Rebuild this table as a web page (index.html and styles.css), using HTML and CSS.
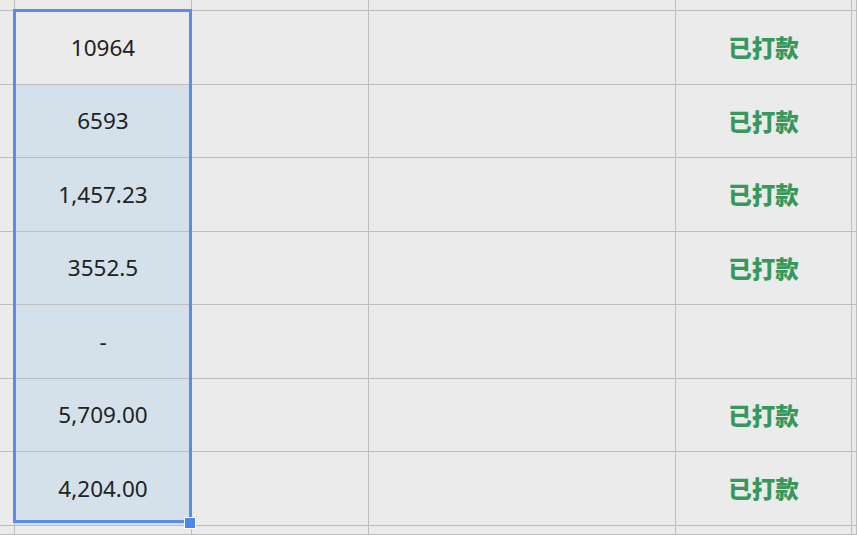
FILE: index.html
```html
<!DOCTYPE html>
<html lang="zh">
<head>
<meta charset="utf-8">
<link rel="stylesheet" href="styles.css">
</head>
<body>
<div class="sheet">
  <div class="grid">
    <div class="c"></div><div class="c"></div><div class="c"></div><div class="c"></div><div class="c"></div><div class="c"></div>

    <div class="c"></div><div class="c num active">10964</div><div class="c"></div><div class="c"></div><div class="c status">已打款</div><div class="c"></div>
    <div class="c"></div><div class="c num sel">6593</div><div class="c"></div><div class="c"></div><div class="c status">已打款</div><div class="c"></div>
    <div class="c"></div><div class="c num sel">1,457.23</div><div class="c"></div><div class="c"></div><div class="c status">已打款</div><div class="c"></div>
    <div class="c"></div><div class="c num sel">3552.5</div><div class="c"></div><div class="c"></div><div class="c status">已打款</div><div class="c"></div>
    <div class="c"></div><div class="c num sel">-</div><div class="c"></div><div class="c"></div><div class="c status"></div><div class="c"></div>
    <div class="c"></div><div class="c num sel">5,709.00</div><div class="c"></div><div class="c"></div><div class="c status">已打款</div><div class="c"></div>
    <div class="c"></div><div class="c num sel">4,204.00</div><div class="c"></div><div class="c"></div><div class="c status">已打款</div><div class="c"></div>

    <div class="c"></div><div class="c"></div><div class="c"></div><div class="c"></div><div class="c"></div><div class="c"></div>
  </div>
  <div class="selection"><span class="handle"></span></div>
</div>
</body>
</html>
```

FILE: styles.css
```css
html, body {
  margin: 0;
  padding: 0;
  background: #ebebeb;
  overflow: hidden;
}

.sheet {
  position: relative;
  width: 857px;
  height: 535px;
  overflow: hidden;
}

.grid {
  display: grid;
  grid-template-columns: 15px 177px 177px 307px 176px 1fr;
  grid-template-rows: 11px repeat(7, 73.5px) 1fr;
  width: 100%;
  height: 100%;
}

.c {
  box-sizing: border-box;
  border-right: 1px solid #bebebe;
  border-bottom: 1px solid #bebebe;
  background: #ebebeb;
  display: flex;
  align-items: center;
  justify-content: center;
}

.num {
  font-family: "Noto Sans", "Open Sans", sans-serif;
  font-size: 22.5px;
  color: #222;
}

.sel {
  background: #d4e1ea;
}

.active {
  background: #ebebeb;
}

.status {
  font-family: "Noto Sans CJK SC", "Noto Sans", sans-serif;
  font-weight: 900;
  font-size: 23.5px;
  color: #36985b;
}

.selection {
  position: absolute;
  left: 13px;
  top: 9px;
  width: 179px;
  height: 514px;
  box-sizing: border-box;
  border: 3px solid #5a8ce8;
  pointer-events: none;
}

.handle {
  position: absolute;
  right: -7px;
  bottom: -9px;
  box-sizing: border-box;
  width: 12px;
  height: 12px;
  background: #4f86ee;
  border: 1px solid #ffffff;
}
```
